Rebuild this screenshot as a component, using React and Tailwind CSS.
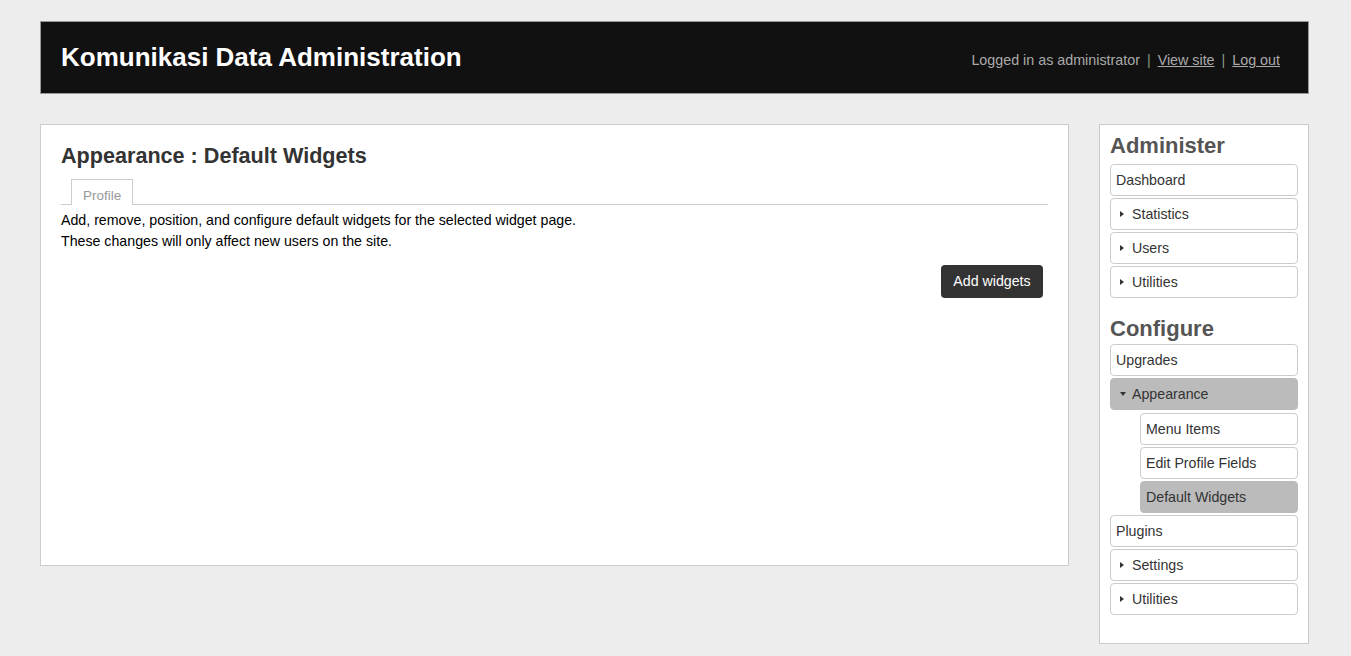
const font = { fontFamily: '"Liberation Sans", Arial, sans-serif' };

const Arrow = ({ open }) =>
  open ? (
    <svg width="6" height="4" viewBox="0 0 6 4" className="shrink-0">
      <polygon points="0,0 6,0 3,4" fill="#333" />
    </svg>
  ) : (
    <svg width="4" height="6" viewBox="0 0 4 6" className="shrink-0">
      <polygon points="0,0 4,3 0,6" fill="#333" />
    </svg>
  );

const NavItem = ({ label, arrow, open, active, sub }) => (
  <li
    className={`h-[32px] flex items-center border rounded-[4px] text-[14.2px] text-[#333] ${
      active ? 'bg-[#bbbbbb] border-[#bbbbbb]' : 'bg-white border-[#cccccc]'
    } ${sub ? 'ml-[30px]' : ''} ${arrow ? (open ? 'pl-[9px] gap-[6px]' : 'pl-[9px] gap-[8px]') : 'pl-[5px]'}`}
  >
    {arrow && <Arrow open={open} />}
    <span className="pt-[2px]">{label}</span>
  </li>
);

export default function App() {
  return (
    <div className="min-h-screen bg-[#ededed] pt-[21px] pb-10" style={font}>
      <div className="w-[1269px] ml-[40px]">
        {/* Header */}
        <div className="h-[73px] bg-[#111111] border border-[#999999] pt-5 pl-5 pr-[28px] flex items-baseline justify-between">
          <h1 className="text-[26px] leading-[30px] font-bold text-white">Komunikasi Data Administration</h1>
          <div className="text-[14.3px] leading-5 text-[#aaaaaa] -translate-y-px">
            Logged in as administrator
            <span className="mx-[7px] text-[#8a9a80]">|</span>
            <a className="underline">View site</a>
            <span className="mx-[7px] text-[#8a9a80]">|</span>
            <a className="underline">Log out</a>
          </div>
        </div>

        <div className="mt-[30px] flex items-start gap-[30px]">
          {/* Main panel */}
          <div className="w-[1029px] h-[442px] bg-white border border-[#cccccc] px-5 pt-[18px]">
            <h2 className="text-[21.6px] leading-[26px] font-bold text-[#333333]">Appearance : Default Widgets</h2>
            <ul className="mt-[10px] flex border-b border-[#cccccc] pl-[10px] h-[26px]">
              <li className="-mb-px h-[26px] bg-white border border-b-0 border-[#cccccc] px-[11px] pt-[8px] text-[13.5px] leading-[16px] text-[#999999]">
                Profile
              </li>
            </ul>
            <div className="mt-[5px] text-[14.2px] leading-[21px] text-black">
              <p>Add, remove, position, and configure default widgets for the selected widget page.</p>
              <p>These changes will only affect new users on the site.</p>
            </div>
            <div className="mt-[13px] flex justify-end pr-[5px]">
              <button className="h-[33px] w-[102px] bg-[#333333] text-white text-[14.2px] rounded-[4px] pt-px">
                Add widgets
              </button>
            </div>
          </div>

          {/* Sidebar */}
          <div className="w-[210px] bg-white border border-[#cccccc] px-[10px] pt-[10px] pb-[28px]">
            <h3 className="text-[22px] leading-[22px] font-bold text-[#555555] mb-[7px]">Administer</h3>
            <ul className="flex flex-col gap-[2px]">
              <NavItem label="Dashboard" />
              <NavItem label="Statistics" arrow />
              <NavItem label="Users" arrow />
              <NavItem label="Utilities" arrow />
            </ul>
            <h3 className="mt-[20px] text-[22px] leading-[22px] font-bold text-[#555555] mb-[4px]">Configure</h3>
            <ul className="flex flex-col gap-[2px]">
              <NavItem label="Upgrades" />
              <NavItem label="Appearance" arrow open active />
              <ul className="flex flex-col gap-[2px] pt-[1px]">
                <NavItem label="Menu Items" sub />
                <NavItem label="Edit Profile Fields" sub />
                <NavItem label="Default Widgets" sub active />
              </ul>
              <NavItem label="Plugins" />
              <NavItem label="Settings" arrow />
              <NavItem label="Utilities" arrow />
            </ul>
          </div>
        </div>
      </div>
    </div>
  );
}
